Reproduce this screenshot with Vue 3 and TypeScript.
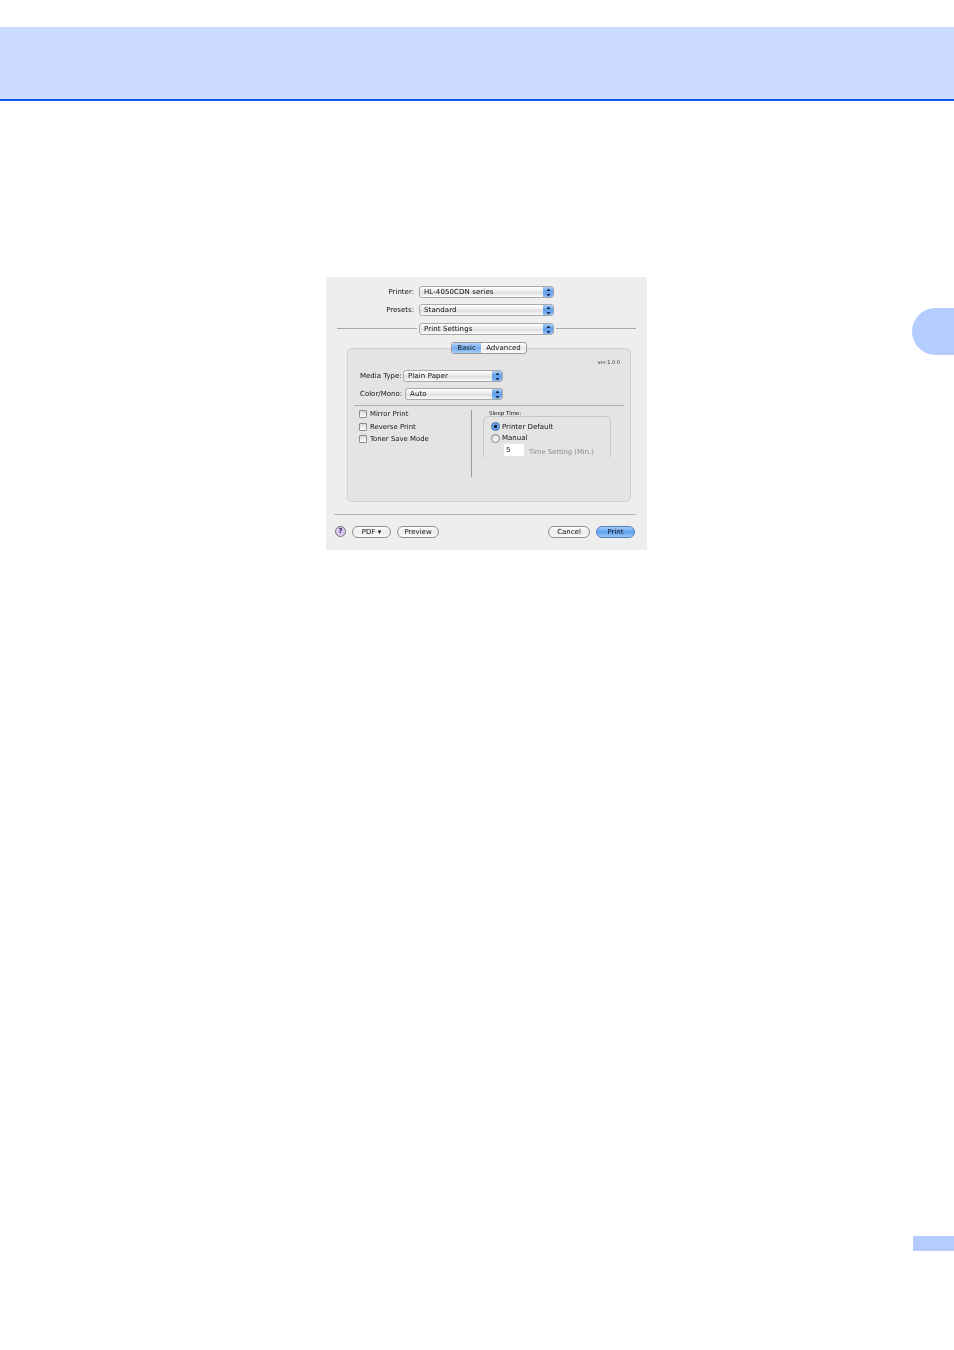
<script setup lang="ts">
interface TopRow {
  label: string;
  value: string;
}

const topRows: TopRow[] = [
  { label: 'Printer:', value: 'HL-4050CDN series' },
  { label: 'Presets:', value: 'Standard' }
]

const checks: string[] = ['Mirror Print', 'Reverse Print', 'Toner Save Mode']
</script>

<template>
  <div class="page">
    <header class="band"></header>

    <div class="middle">
      <section class="dialog">
        <div v-for="row in topRows" :key="row.label" class="top-row">
          <span class="top-label">{{ row.label }}</span>
          <div class="select wide">
            <span class="select-text">{{ row.value }}</span>
            <span class="cap"><svg width="5" height="9" viewBox="0 0 5 9"><path d="M2.5 0.5 4.5 3H.5zM2.5 8.5 .5 6h4z" fill="#14264a"/></svg></span>
          </div>
        </div>

        <div class="settings-row">
          <span class="rule"></span>
          <div class="select wide">
            <span class="select-text">Print Settings</span>
            <span class="cap"><svg width="5" height="9" viewBox="0 0 5 9"><path d="M2.5 0.5 4.5 3H.5zM2.5 8.5 .5 6h4z" fill="#14264a"/></svg></span>
          </div>
          <span class="rule"></span>
        </div>

        <div class="tabs">
          <span class="tab active">Basic</span>
          <span class="tab">Advanced</span>
        </div>

        <div class="panel">
          <div class="version">ver:1.0.0</div>
          <div class="field">
            <span>Media Type:</span>
            <div class="select media">
              <span class="select-text">Plain Paper</span>
              <span class="cap"><svg width="5" height="9" viewBox="0 0 5 9"><path d="M2.5 0.5 4.5 3H.5zM2.5 8.5 .5 6h4z" fill="#14264a"/></svg></span>
            </div>
          </div>
          <div class="field second">
            <span>Color/Mono:</span>
            <div class="select mono">
              <span class="select-text">Auto</span>
              <span class="cap"><svg width="5" height="9" viewBox="0 0 5 9"><path d="M2.5 0.5 4.5 3H.5zM2.5 8.5 .5 6h4z" fill="#14264a"/></svg></span>
            </div>
          </div>
          <div class="panel-rule"></div>

          <div class="lower">
            <div class="checks">
              <label v-for="item in checks" :key="item" class="check">
                <span class="box"></span>{{ item }}
              </label>
            </div>
            <div class="vrule"></div>
            <div class="sleep">
              <div class="sleep-title">Sleep Time:</div>
              <div class="group">
                <div class="radio-row"><span class="radio on"></span>Printer Default</div>
                <div class="radio-row"><span class="radio"></span>Manual</div>
                <div class="time-row">
                  <span class="time-input">5</span>
                  <span class="time-label">Time Setting (Min.)</span>
                </div>
              </div>
            </div>
          </div>
        </div>

        <div class="bottom-rule"></div>
        <div class="actions">
          <span class="help">?</span>
          <span class="btn pdf">PDF ▾</span>
          <span class="btn preview">Preview</span>
          <span class="btn cancel">Cancel</span>
          <span class="btn print">Print</span>
        </div>
      </section>

      <div class="side-tab"></div>
    </div>

    <div class="page-tab"></div>
  </div>
</template>

<style>
html, body {
  background: #fff;
}
</style>

<style scoped>
.page {
  height: 1350px;
  width: 954px;
  overflow: hidden;
  padding-top: 27px;
  box-sizing: border-box;
  font-family: "DejaVu Sans", sans-serif;
  font-size: 7px;
  color: #111;
}

.band {
  height: 72px;
  background: #cbdcff;
  border-bottom: 2px solid #0a5ae6;
}

.middle {
  display: grid;
  grid-template-columns: 326px 321px 1fr;
  margin-top: 176px;
}

.dialog {
  grid-column: 2;
  height: 273px;
  box-sizing: border-box;
  padding-top: 9px;
  background: #eeeeee;
  filter: blur(0.3px);
}

.side-tab {
  grid-column: 3;
  justify-self: end;
  margin-top: 31px;
  width: 42px;
  height: 47px;
  background: #b5ccff;
  border-radius: 24px 0 0 24px;
}

.page-tab {
  margin: 686px 0 0 913px;
  width: 41px;
  height: 15px;
  background: #b5ccff;
}

.top-row {
  display: flex;
  align-items: center;
  height: 12px;
  margin-bottom: 6px;
}

.top-label {
  width: 88px;
  text-align: right;
  margin-right: 5px;
}

.select {
  display: flex;
  justify-content: space-between;
  height: 12px;
  box-sizing: border-box;
  border: 1px solid #a9a9a9;
  border-radius: 3px;
  background: linear-gradient(#ffffff, #e9e9e9 45%, #dcdcdc 50%, #fbfbfb);
  overflow: hidden;
}

.wide {
  width: 135px;
}

.media {
  width: 100px;
}

.mono {
  width: 98px;
}

.select-text {
  padding-left: 4px;
  line-height: 10px;
  letter-spacing: 0.1px;
}

.cap {
  display: flex;
  align-items: center;
  justify-content: center;
  width: 10px;
  background: linear-gradient(#a9ccf6, #5f9eea 50%, #8bbcf3);
}

.settings-row {
  display: flex;
  align-items: center;
  gap: 2px;
  margin: 7px 11px 0 11px;
}

.rule {
  flex: 1;
  height: 1px;
  margin-bottom: 2px;
  background: #a8a8a8;
}

.tabs {
  position: relative;
  z-index: 1;
  display: flex;
  width: 76px;
  height: 12px;
  box-sizing: border-box;
  margin: 7px 0 -6px 125px;
  border: 1px solid #9a9a9a;
  border-radius: 3px;
  background: linear-gradient(#ffffff, #ececec 50%, #fafafa);
  line-height: 10px;
  overflow: hidden;
}

.tab {
  flex: 1;
  text-align: center;
}

.tab.active {
  flex: 0 0 29px;
  background: linear-gradient(#b6d3f8, #74aeef 50%, #a3cbf7);
}

.panel {
  width: 284px;
  height: 154px;
  box-sizing: border-box;
  margin-left: 21px;
  padding-top: 10px;
  background: #e4e4e4;
  border: 1px solid #cfcfcf;
  border-radius: 5px;
}

.version {
  text-align: right;
  padding-right: 10px;
  font-size: 5px;
  line-height: 6px;
  color: #333;
}

.field {
  display: flex;
  align-items: center;
  justify-content: space-between;
  width: 143px;
  margin: 5px 0 0 12px;
  height: 12px;
}

.field.second {
  margin-top: 6px;
}

.panel-rule {
  height: 1px;
  margin: 5px 6px 0;
  background: #b0b0b0;
}

.lower {
  display: flex;
  padding-top: 4px;
}

.checks {
  display: flex;
  flex-direction: column;
  gap: 4px;
  width: 123px;
  padding-left: 11px;
  box-sizing: border-box;
  font-size: 6.9px;
}

.check {
  display: flex;
  align-items: center;
  gap: 3px;
  height: 8.5px;
}

.box {
  width: 8px;
  height: 8px;
  box-sizing: border-box;
  border: 1px solid #8d8d8d;
  border-radius: 1px;
  background: linear-gradient(#d8d8d8, #ffffff);
}

.vrule {
  width: 1px;
  height: 67px;
  background: #9c9c9c;
}

.sleep {
  margin-left: 11px;
  width: 128px;
}

.sleep-title {
  font-size: 5.5px;
  line-height: 6px;
  margin-left: 6px;
}

.group {
  height: 43px;
  box-sizing: border-box;
  padding: 4px 0 0 7px;
  border: 1px solid #c6c6c6;
  border-bottom-color: #dedede;
  border-radius: 5px;
}

.radio-row {
  display: flex;
  align-items: center;
  gap: 2px;
  height: 11.5px;
}

.radio {
  width: 9px;
  height: 9px;
  box-sizing: border-box;
  border: 1px solid #808080;
  border-radius: 50%;
  background: linear-gradient(#dedede, #ffffff);
}

.radio.on {
  border-color: #3b68a8;
  background: radial-gradient(circle, #10203c 0 1.4px, #6ea6ec 2px);
}

.time-row {
  display: flex;
  align-items: center;
  margin-left: 13px;
  height: 12px;
}

.time-input {
  width: 20px;
  height: 12px;
  padding-left: 2px;
  box-sizing: border-box;
  background: #fff;
  line-height: 12px;
}

.time-label {
  margin: 3px 0 0 5px;
  color: #8a8a8a;
  font-size: 6.8px;
}

.bottom-rule {
  height: 1px;
  margin: 12px 11px 0 8px;
  background: #b4b4b4;
}

.actions {
  display: flex;
  align-items: center;
  margin: 10px 12px 0 9px;
  height: 13px;
}

.help {
  width: 11px;
  height: 11px;
  box-sizing: border-box;
  border: 1px solid #777;
  border-radius: 50%;
  background: #d9c6f2;
  text-align: center;
  font-size: 7px;
  font-weight: bold;
  line-height: 9px;
  color: #2b1c50;
}

.btn {
  height: 12px;
  box-sizing: border-box;
  border: 1px solid #8f8f8f;
  border-radius: 6px;
  background: linear-gradient(#ffffff, #ececec 50%, #fafafa);
  text-align: center;
  line-height: 10px;
}

.pdf {
  width: 39px;
  margin-left: 6px;
}

.preview {
  width: 42px;
  margin-left: 6px;
}

.cancel {
  width: 42px;
  margin-left: auto;
}

.print {
  width: 39px;
  margin-left: 6px;
  border-color: #4f7fc0;
  background: linear-gradient(#a6cbf7, #5fa0ee 50%, #9cc8f8);
}
</style>
